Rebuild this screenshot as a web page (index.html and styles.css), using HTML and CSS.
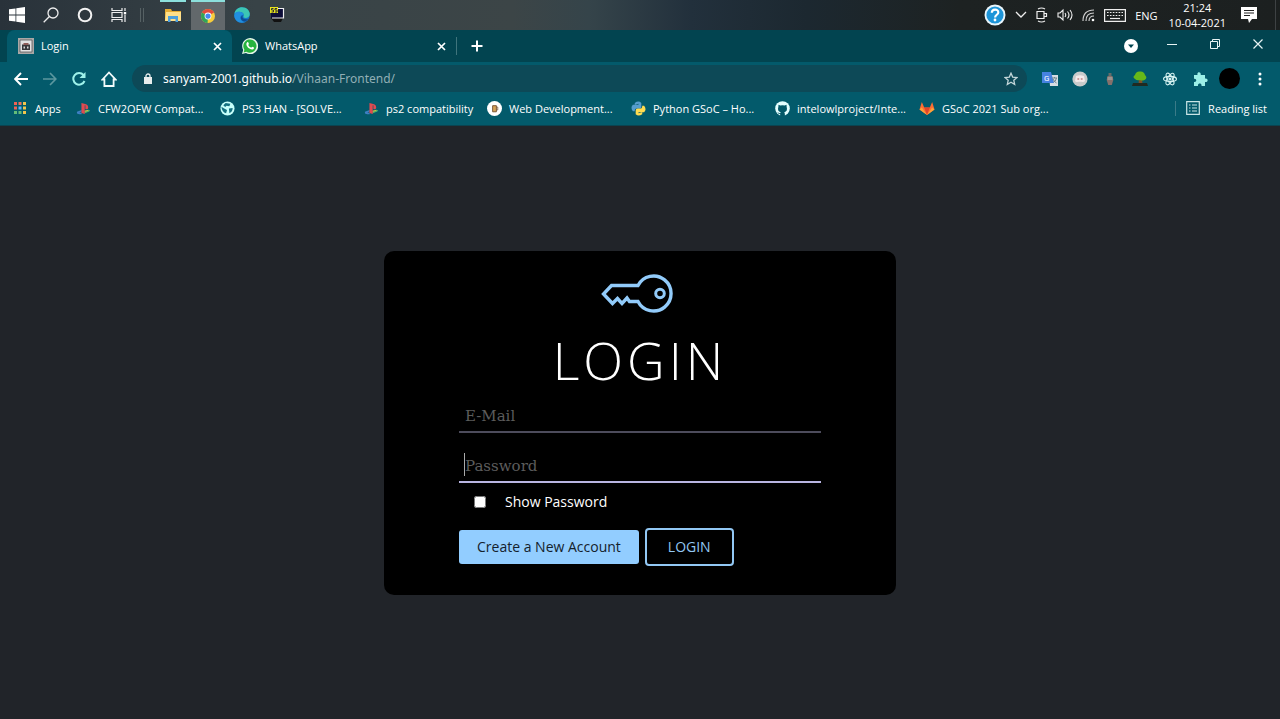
FILE: index.html
```html
<!DOCTYPE html>
<html lang="en">
<head>
<meta charset="utf-8">
<title>Login</title>
<link rel="stylesheet" href="styles.css">
</head>
<body>
<svg class="symbols" aria-hidden="true">
  <symbol id="ps" viewBox="0 0 16 16">
    <path d="M1 11.500l5-2v1.800l-2.500 1 2.500.3v1.400c-2 .4-4 0-5-1z" fill="#3f7fc4"/>
    <path d="M9 10.500l4-1.300c2 .1 2.600 1.300 1 2.100L9 13.200z" fill="#49b36b"/>
    <path d="M9 11l4-1" stroke="#e9b53a" stroke-width="1"/>
    <path d="M5.800 2l4 1.200c2.300.8 3.200 1.700 3.200 3.600 0 1.800-1.200 2.400-3 1.600V5.100c0-.5-.7-.7-.7-.1v8.900l-3.500-1.200z" fill="#e04a50"/>
  </symbol>
</svg>

<header class="taskbar">
  <div class="apps">
    <button class="app" aria-label="Start"><svg width="16" height="16" viewBox="0 0 16 16" fill="#fff"><path d="M0 2.300l6.500-.9v6.200H0zM7.300 1.300L16 0v7.600H7.300zM0 8.400h6.500v6.200L0 13.700zM7.300 8.400H16V16l-8.700-1.300z"/></svg></button>
    <button class="app" aria-label="Search"><svg width="16" height="16" viewBox="0 0 16 16" fill="none" stroke="#eee" stroke-width="1.300"><circle cx="10" cy="6" r="5"/><path d="M6.400 9.500L.7 15.300"/></svg></button>
    <button class="app" aria-label="Cortana"><svg width="16" height="16" viewBox="0 0 16 16" fill="none" stroke="#f2f2f2" stroke-width="2"><circle cx="8" cy="8" r="6.300"/></svg></button>
    <button class="app" aria-label="Task view"><svg width="16" height="16" viewBox="0 0 16 16" fill="none" stroke="#eee" stroke-width="1.200"><path d="M1 1v2.500h10V1M1 15v-2.500h10V15M1 5.500h10v5H1zM14 1v3M14 8v7"/><path d="M12.800 5h2.400v2.400h-2.400z" fill="#fff" stroke="none"/></svg></button>
    <span class="grip"></span>
    <button class="app open" aria-label="File Explorer"><svg width="16" height="16" viewBox="0 0 16 16"><path d="M0 1h6l1 2h9v10H0z" fill="#e6ad35"/><path d="M1 4h15v9H0z" fill="#ffe08a"/><path d="M3 14V8h10v6h-2.500v-3h-5v3z" fill="#4c9fdc"/></svg></button>
    <button class="app open current" aria-label="Chrome"><svg width="14" height="14" viewBox="0 0 16 16"><circle cx="8" cy="8" r="8" fill="#f8cd3b"/><path d="M8 8L1.100 4A8 8 0 0 1 14.900 4z" fill="#e34b3c"/><path d="M8 8L7.500 16A8 8 0 0 1 1.100 4z" fill="#31a45a"/><circle cx="8" cy="8" r="3.900" fill="#fff"/><circle cx="8" cy="8" r="3" fill="#4688ed"/></svg></button>
    <button class="app" aria-label="Edge"><svg width="16" height="16" viewBox="0 0 16 16"><circle cx="8" cy="8" r="7.800" fill="#1678c8"/><path d="M.4 7C1 2.500 4.500.2 8 .2c5 0 7.800 3.600 7.800 6.800 0 2.500-2 4-4.300 4-1.500 0-2.500-.6-2-1.400C10.800 7 8.500 5 6 5 3.500 5 1.300 5.500.4 7z" fill="#3cc6b4"/><path d="M.3 8C1 5.500 3.500 4.300 6 4.700c2 .3 3.300 1.500 3.500 3-3-.5-4.500 3-2 5.700 1 1 2.500 1.500 4 1.500C5 17.500 0 13 .3 8z" fill="#218fe0"/><path d="M9 8.500c-1.600 2 .5 4.500 5.300 3.400-1 1.500-2.500 2.400-4 2.600C6 13.500 5.800 9 9 8.500z" fill="#0d4c96"/></svg></button>
    <button class="app" aria-label="Terminal"><svg width="16" height="16" viewBox="0 0 16 16"><path d="M2 12h12l-2 4H5z" fill="#111"/><path d="M2 2h12v10H2z" fill="#0d0d38"/><path d="M8 2.500h6.500v9.500H3" fill="none" stroke="#eee" stroke-width="1.200"/><path d="M1 1h8v6H1z" fill="#e9e51b"/><path d="M4.500 2.500h-2v1.500h2v2h-2M8 2.500H6v1.500h2v2H6" fill="none" stroke="#333"/></svg></button>
  </div>
  <div class="tray">
    <svg width="22" height="22" viewBox="0 0 22 22"><circle cx="11" cy="11" r="10.500" fill="#e9f5fb"/><circle cx="11" cy="11" r="8.600" fill="#1d94d8"/><path d="M7.800 8.800c0-4.300 6.600-4.200 6.500-.4 0 2.200-3.200 2.600-3.200 5" fill="none" stroke="#fff" stroke-width="2.200"/><circle cx="11" cy="16" r="1.400" fill="#fff"/></svg>
    <svg width="12" height="8" viewBox="0 0 12 8" fill="none" stroke="#eee" stroke-width="1.300"><path d="M1 1l5 5 5-5"/></svg>
    <svg width="12" height="16" viewBox="0 0 12 16" fill="none" stroke="#eee" stroke-width="1.200"><path d="M1 4.500h7v7H1zM8 6.500h2.500v3H8M2 2q3.500-2 7 0M2 14q3.500 2 7 0"/></svg>
    <svg width="16" height="14" viewBox="0 0 16 14" fill="none" stroke="#eee" stroke-width="1.100"><path d="M1 5h2l3-3v10L3 9H1zM8 5q1.500 2 0 4M10.500 3.500q3 3.500 0 7M13 2q4 5 0 10"/></svg>
    <svg width="13" height="14" viewBox="0 0 13 14" fill="none" stroke="#ccc" stroke-width="1.200"><path d="M1 13Q1 2 12 2M4 13Q4 5 12 5M7 13Q7 8 12 8"/><circle cx="11" cy="12" r="1.300" fill="#fff" stroke="none"/></svg>
    <svg width="22" height="13" viewBox="0 0 22 13" fill="none" stroke="#eee" stroke-width="1.200"><path d="M.6.600h20.800v11.800H.6z"/><path d="M3 3.500h16M3 6.500h16" stroke-dasharray="1.600 1.300"/><path d="M6 9.500h10"/></svg>
    <span>ENG</span>
    <time class="clock" datetime="2021-04-10T21:24">21:24<br>10-04-2021</time>
    <svg class="notice" width="16" height="16" viewBox="0 0 16 16"><path d="M0 0h16v12h-5l-3 4-1-4H0z" fill="#fff"/><path d="M3 3.500h10M3 6h10M3 8.500h6" stroke="#222"/></svg>
  </div>
</header>

<nav class="tabs">
  <div class="tab active">
    <svg width="16" height="16" viewBox="0 0 16 16"><path d="M0 0h16v16H0z" fill="#a9a7a6"/><path d="M2 2h12v12H2z" fill="#e2e2e2" stroke="#55595b" stroke-width=".8"/><path d="M4 6.500h8V12H4z" fill="#39393c"/><path d="M5.500 5h5v2h-5z" fill="#8e5c58"/><path d="M5.500 8.500h1.500v2H5.500zM9 8.500h1.500v2H9z" fill="#d9d9d9"/></svg>
    <a class="tab-name" href="#">Login</a>
    <button class="close" aria-label="Close Login"><svg width="9" height="9" viewBox="0 0 9 9" stroke="#fff" stroke-width="1.700"><path d="M1 1l7 7M8 1L1 8"/></svg></button>
  </div>
  <div class="tab">
    <svg width="16" height="16" viewBox="0 0 16 16"><path d="M0 16l1.200-4A8 8 0 1 1 4 14.900z" fill="#e8f7ea"/><path d="M1.600 14.400l.8-2.700A6.600 6.600 0 1 1 4.500 13.700z" fill="#27b43e"/><path d="M5.200 4.200c.8-.5 1.100 0 1.700 1.500.1.400-.6.900-.6 1.200.6 1.300 1.600 2.200 2.900 2.700.5 0 .8-1 1.200-.9 1.700.7 1.800.8 1.600 1.500-.6 1.700-2.700 1.500-4.600.3C5 9 3.300 6 5.200 4.200z" fill="#fff"/></svg>
    <a class="tab-name" href="#">WhatsApp</a>
    <button class="close" aria-label="Close WhatsApp"><svg width="9" height="9" viewBox="0 0 9 9" stroke="#fff" stroke-width="1.700"><path d="M1 1l7 7M8 1L1 8"/></svg></button>
  </div>
  <button class="new-tab" aria-label="New tab"><svg width="12" height="12" viewBox="0 0 12 12" stroke="#fff" stroke-width="2"><path d="M6 .500v11M.5 6h11"/></svg></button>
  <div class="window">
    <button class="tab-search" aria-label="Tab search"><svg width="14" height="14" viewBox="0 0 14 14"><circle cx="7" cy="7" r="7" fill="#fff"/><path d="M4 5.500h6L7 9z" fill="#024450"/></svg></button>
    <button aria-label="Minimize"><svg width="10" height="10" viewBox="0 0 10 10" stroke="#e8f4f4"><path d="M0 5.500h10"/></svg></button>
    <button aria-label="Restore"><svg width="10" height="10" viewBox="0 0 10 10" fill="none" stroke="#e8f4f4"><path d="M.5 2.500h7v7h-7zM2.500 2.500v-2h7v7h-2"/></svg></button>
    <button aria-label="Close window"><svg width="10" height="10" viewBox="0 0 10 10" stroke="#e8f4f4" stroke-width="1.200"><path d="M.5.500l9 9M9.500.500l-9 9"/></svg></button>
  </div>
</nav>

<div class="toolbar">
  <button aria-label="Back"><svg width="14" height="14" viewBox="0 0 14 14" fill="none" stroke="#fff" stroke-width="1.900"><path d="M14 7H1.500M7 1L1.200 7 7 13"/></svg></button>
  <button aria-label="Forward"><svg width="14" height="14" viewBox="0 0 14 14" fill="none" stroke="#5c979f" stroke-width="1.700"><path d="M0 7h12.500M7 1l5.800 6L7 13"/></svg></button>
  <button aria-label="Reload"><svg width="14" height="14" viewBox="0 0 14 14" fill="none" stroke="#9ff2ea" stroke-width="2"><path d="M12.500 9A5.800 5.800 0 1 1 11.500 3"/><path d="M13.500 0v6h-6z" fill="#9ff2ea" stroke="none"/></svg></button>
  <button aria-label="Home"><svg width="16" height="16" viewBox="0 0 16 16" fill="none" stroke="#f2fbfb" stroke-width="1.800"><path d="M1.500 8.500L8 1.500l6.500 7h-1.900V15H3.400V8.500z"/></svg></button>
  <div class="address">
    <svg width="8" height="11" viewBox="0 0 8 11"><path d="M0 4h8v7H0z" fill="#e8eded"/><path d="M2 4.500V3a2 2 0 0 1 4 0v1.500" fill="none" stroke="#e8eded" stroke-width="1.300"/></svg>
    <a class="url" href="#">sanyam-2001.github.io<span>/Vihaan-Frontend/</span></a>
    <svg width="14" height="14" viewBox="0 0 14 14" fill="none" stroke="#c3d6d9" stroke-width="1.300"><path d="M7 1.200l1.700 3.900 4.300.4-3.200 2.800.9 4.200L7 10.300l-3.700 2.200.9-4.200L1 5.500l4.300-.4z"/></svg>
  </div>
  <div class="extensions">
    <svg width="16" height="16" viewBox="0 0 16 16"><path d="M7 4h9v11H8z" fill="#d6dde3"/><path d="M0 1h9l3 11H0z" fill="#4682df"/><text x="2" y="10" font-size="8" font-family="Roboto, sans-serif" fill="#fff">G</text><path d="M10 7h5M12.500 6v1M14.500 7q-1 4-3 4M11 8q1.500 3 3.500 4" fill="none" stroke="#70858d"/></svg>
    <svg width="16" height="16" viewBox="0 0 16 16"><circle cx="8" cy="8" r="7.600" fill="#c9cbcb"/><path d="M4 5q4-1.500 8 0l1 5q-1.500 1.500-3 .7H6Q4 11.500 3 10z" fill="#f4eaea"/><circle cx="6.300" cy="8" r="1.100" fill="#c69797"/><circle cx="9.700" cy="8" r="1.100" fill="#c69797"/></svg>
    <svg width="16" height="16" viewBox="0 0 16 16"><path d="M6.500 2h3v3h-3z" fill="#646c6b"/><path d="M5.500 5h5l.8 4-1.500 5H6.200L4.700 9z" fill="#85706b"/><path d="M5.500 6h5v3h-5z" fill="#9a9590"/></svg>
    <svg width="16" height="16" viewBox="0 0 16 16"><path d="M7 8h3l.5 5h-4z" fill="#805329"/><path d="M3 8q-3-2 0-4Q4 0 8 .500q4-.5 5 3.500 3 3-.5 5-3 1-4.500 0-3 1-5-1z" fill="#67b819"/><path d="M1 12h14l1 3H0z" fill="#202a21"/></svg>
    <svg width="16" height="16" viewBox="0 0 16 16" fill="none" stroke="#d8f4f3" stroke-width="1.100"><ellipse cx="8" cy="8" rx="6.500" ry="2.600"/><ellipse cx="8" cy="8" rx="6.500" ry="2.600" transform="rotate(60 8 8)"/><ellipse cx="8" cy="8" rx="6.500" ry="2.600" transform="rotate(120 8 8)"/><circle cx="8" cy="8" r="1" fill="#fff"/></svg>
    <svg width="16" height="16" viewBox="0 0 16 16"><path d="M2 4h3.500C4.500.200 9.500.200 8.700 4H13v3.500c3.500-.8 3.500 4.300 0 3.500V15H9.500c.6-3.300-4.100-3.300-3.500 0H2v-4c3 .6 3-3.900 0-3.300z" fill="#9cefe7"/></svg>
  </div>
  <button class="profile" aria-label="Profile"></button>
  <button class="more" aria-label="Menu"><svg width="4" height="14" viewBox="0 0 4 14" fill="#fff"><circle cx="2" cy="2" r="1.500"/><circle cx="2" cy="7" r="1.500"/><circle cx="2" cy="12" r="1.500"/></svg></button>
</div>

<nav class="bookmarks">
  <a class="bookmark apps-link" href="#"><svg width="14" height="14" viewBox="0 0 14 14"><path d="M1 1h3v3H1zM1 5.500h3v3H1z" fill="#f06155"/><path d="M5.500 1h3v3h-3z" fill="#ef725d"/><path d="M10 1h3v3h-3zM10 5.500h3v3h-3zM10 10h3v3h-3z" fill="#f1c54c"/><path d="M5.500 5.500h3v3h-3z" fill="#62b4fb"/><path d="M1 10h3v3H1zM5.500 10h3v3h-3z" fill="#63bd78"/></svg><span>Apps</span></a>
  <a class="bookmark" href="#"><svg width="15" height="15"><use href="#ps"/></svg><span>CFW2OFW Compat...</span></a>
  <a class="bookmark" href="#"><svg width="15" height="15" viewBox="0 0 16 16"><circle cx="8" cy="8" r="7.500" fill="#c6fffa"/><path d="M1.500 6l3 2 3 1.500-1 3.500Q2 11.500 1.500 6zM6 2l5 1-1 2.500-3-.5-1.500 1.500-2-2zM9.500 8l4-.5q0 4-3.500 5.500z" fill="#137080"/></svg><span>PS3 HAN - [SOLVE...</span></a>
  <a class="bookmark short" href="#"><svg width="15" height="15"><use href="#ps"/></svg><span>ps2 compatibility</span></a>
  <a class="bookmark" href="#"><svg width="15" height="15" viewBox="0 0 16 16"><circle cx="8" cy="8" r="8" fill="#fff"/><path d="M6 5h4v6.500H6z" fill="#d5a258" stroke="#765333"/><path d="M10 6.500h1.500v3H10" fill="none" stroke="#765333" stroke-width=".8"/></svg><span>Web Development...</span></a>
  <a class="bookmark" href="#"><svg width="15" height="15" viewBox="0 0 16 16"><path d="M4 4V2q4-3 7 0v4q0 2-2 2H6q-2 0-2 3H2q-3-4 0-7h6V3z" fill="#559dcd"/><path d="M12 12v2q-4 3-7 0v-4q0-2 2-2h3q2 0 2-3h2q3 4 0 7H8v1z" fill="#ffdc50"/></svg><span>Python GSoC – Ho...</span></a>
  <a class="bookmark" href="#"><svg width="15" height="15" viewBox="0 0 16 16"><circle cx="8" cy="8" r="7.800" fill="#e4ffff"/><path d="M5.500 16v-2.200c-2 .4-2.200-1.300-3-1.700 1-.2 1.500 1.200 3 .9l.6-1C3.500 11.600 2.600 9.500 3.600 6.200L3.700 4l2 .8q2.300-.6 4.600 0l2-.8.1 2.200c1 3.300.1 5.400-2.500 5.800.5.600.6 1.300.6 2V16z" fill="#035868"/></svg><span>intelowlproject/Inte...</span></a>
  <a class="bookmark" href="#"><svg width="16" height="15" viewBox="0 0 16 16"><path d="M0 9L2.500 1 5 7h6l2.500-6L16 9l-8 6z" fill="#fc6d32"/><path d="M5 7h6l-3 8z" fill="#e24329"/><path d="M0 9l2.500-2L8 15zM16 9l-2.500-2L8 15z" fill="#fca33a"/></svg><span>GSoC 2021 Sub org...</span></a>
  <a class="bookmark reading" href="#"><svg width="14" height="14" viewBox="0 0 14 14" fill="none" stroke="#c9e5e6" stroke-width="1.200"><path d="M.7.700h12.600v12.600H.7zM6 4h5M6 7h5M6 10h5M3 4h1.500M3 7h1.500M3 10h1.500"/></svg><span>Reading list</span></a>
</nav>

<main class="page">
  <form class="card">
    <svg class="key" width="72" height="40" viewBox="0 0 72 40" fill="none" stroke="#92cbfa" stroke-width="3.400"><path d="M37 11.500H10.500L2.500 20l9 9.500 5-5 4.500 5 5-5.500 2.500 3.500H37A17.500 17.500 0 1 0 37 11.500z"/><circle cx="59" cy="19.500" r="4.300" stroke-width="3"/></svg>
    <h1>LOGIN</h1>
    <input class="field" type="email" placeholder="E-Mail" aria-label="E-Mail">
    <div class="password">
      <input class="field selected" type="password" placeholder="Password" aria-label="Password">
      <span class="caret"></span>
    </div>
    <div class="show"><input type="checkbox" id="show"><label for="show">Show Password</label></div>
    <div class="actions">
      <button class="create" type="button">Create a New Account</button>
      <button class="login" type="submit">LOGIN</button>
    </div>
  </form>
</main>
</body>
</html>
```

FILE: styles.css
```css
* { box-sizing: border-box; }

body {
  margin: 0;
  min-height: 100vh;
  display: flex;
  flex-direction: column;
  background: #212429;
  color: #fff;
  font-family: "Open Sans", "Noto Sans", sans-serif;
  font-size: 11px;
}

button {
  padding: 0;
  border: 0;
  background: none;
  color: inherit;
  font: inherit;
}

a { color: inherit; text-decoration: none; }
svg { display: block; flex: none; }
.symbols { position: absolute; width: 0; height: 0; }

.taskbar {
  height: 30px;
  display: flex;
  justify-content: space-between;
  background: linear-gradient(90deg, #29323a, #384347 20%, #3c4547 40%, #35444a 46%, #22303c 54%, #1c2830 63%, #1d2222 75%, #1c2020);
}

.apps { display: flex; align-items: stretch; }
.app {
  width: 34px;
  display: flex;
  align-items: center;
  justify-content: center;
}
.grip {
  width: 4px;
  height: 14px;
  margin: 8px 16px 8px 4px;
  border: solid #566164;
  border-width: 0 1px;
}
.open { border-top: 2px solid #8ce0dc; }
.grip + .open { width: 26px; margin-right: 5px; }
.current { background: #62686b; }
.apps .app:last-child { width: 36px; padding-bottom: 3px; }

.tray {
  display: flex;
  align-items: center;
  gap: 9px;
  padding-right: 4px;
  margin-right: 4px;
  border-right: 1px solid #3e4244;
}
.clock { margin-left: 2px; text-align: center; line-height: 15px; }
.notice { margin: 0 14px 0 6px; }

.tabs {
  height: 32px;
  display: flex;
  background: #024450;
}
.tab {
  width: 224px;
  display: flex;
  align-items: center;
  gap: 7px;
  padding: 0 10px;
}
.active {
  width: 225px;
  margin-left: 7px;
  padding-left: 11px;
  border-radius: 8px 8px 0 0;
  background: #035a6b;
}
.tab-name { flex: 1; padding-bottom: 2px; }
.new-tab { display: flex; align-items: center; padding-left: 14px; margin: 7px 0; border-left: 1px solid #3f747c; }
.window {
  display: flex;
  align-items: center;
  gap: 33px;
  margin-left: auto;
  padding: 0 17px 4px 0;
}
.tab-search { margin-right: -4px; padding-top: 4px; }

.toolbar {
  height: 33px;
  display: flex;
  align-items: center;
  gap: 15px;
  padding: 0 18px 0 14px;
  background: #035a6b;
}
.address {
  flex: 1;
  height: 27px;
  display: flex;
  align-items: center;
  gap: 11px;
  padding: 0 9px 0 12px;
  border-radius: 14px;
  background: #0d4957;
}
.url { flex: 1; font-family: "Noto Sans", sans-serif; font-size: 12px; }
.url span { color: #91afb5; }
.extensions { display: flex; gap: 14px; }
.profile { width: 21px; height: 21px; margin: 0 3px 0 -4px; border-radius: 50%; background: #000; }

.bookmarks {
  height: 31px;
  display: flex;
  align-items: center;
  padding: 0 13px 4px 13px;
  border-bottom: 1px solid #0b4350;
  background: #035a6b;
}
.bookmark {
  width: 144px;
  display: flex;
  align-items: center;
  gap: 7px;
  white-space: nowrap;
}
.apps-link { width: 63px; gap: 8px; }
.short { width: 123px; }
.reading { width: auto; gap: 8px; margin-left: auto; padding-left: 10px; border-left: 1px solid #3b7b88; }

.page {
  flex: 1;
  display: flex;
  align-items: center;
  justify-content: center;
}
.card {
  width: 40%;
  min-width: 440px;
  display: flex;
  flex-direction: column;
  padding: 23px 75px 29px;
  border-radius: 10px;
  background: #000;
  font-size: 14px;
}
.key { align-self: center; margin-right: 6px; }
h1 {
  margin: 12px 0 7px;
  padding-right: 0;
  text-align: center;
  font-size: 52px;
  line-height: 68px;
  font-weight: 300;
  letter-spacing: 4px;
}
.field {
  width: 100%;
  height: 32px;
  padding: 0 6px;
  border: 0;
  border-bottom: 2px solid #4d4c5c;
  outline: 0;
  background: none;
  color: #fff;
  font: 15px "DejaVu Serif", serif;
}
.field::placeholder { color: #5c5c5c; opacity: 1; }
.password { position: relative; margin-top: 18px; }
.selected { border-color: #b9b5e2; }
.caret { position: absolute; left: 5px; top: 2px; width: 1px; height: 23px; background: #aaa; }
.show { display: flex; align-items: center; gap: 19px; padding-left: 15px; margin-top: 9px; }
.show input { width: 12px; height: 12px; margin: 0; }
.show label { line-height: 20px; }
.actions { display: flex; align-items: center; gap: 6px; margin-top: 16px; }
.create { height: 34px; padding: 0 18px; border-radius: 3px; background: #92cdff; color: #14212c; }
.login { height: 38px; padding: 0 21px; border: 2px solid #92c7f3; border-radius: 4px; color: #92c7f3; }
```
